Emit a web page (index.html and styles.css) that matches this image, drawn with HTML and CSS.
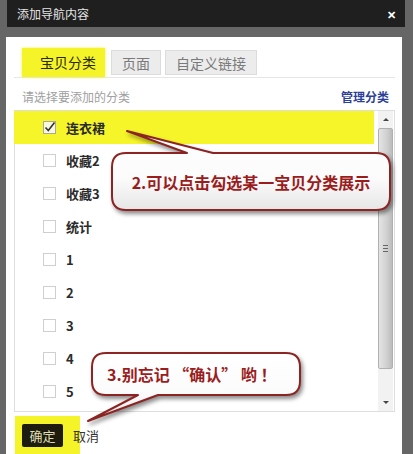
FILE: index.html
```html
<!DOCTYPE html>
<html>
<head>
    <meta charset="utf-8">
    <title>添加导航内容</title>
    <link rel="stylesheet" href="styles.css">
</head>
<body>

    <div class="titlebar">
        <span class="title">添加导航内容</span>
        <span class="close">&#x2715;</span>
    </div>

    <div class="panel">
        <div class="tabs">
            <div class="tab tab-active">宝贝分类</div>
            <div class="tab">页面</div>
            <div class="tab">自定义链接</div>
        </div>

        <div class="hint-row">
            <span class="hint">请选择要添加的分类</span>
            <a class="manage">管理分类</a>
        </div>

        <div class="listbox">
            <div class="rows">
                <div class="row row-checked">
                    <span class="check"><svg width="13" height="13" viewBox="0 0 13 13"><path d="M2.5 6.5 L5.3 9.5 L11.5 1.5" fill="none" stroke="#333" stroke-width="1.6"/></svg></span>
                    <span class="label">连衣裙</span>
                </div>
                <div class="row"><span class="check"></span><span class="label">收藏2</span></div>
                <div class="row"><span class="check"></span><span class="label">收藏3</span></div>
                <div class="row"><span class="check"></span><span class="label">统计</span></div>
                <div class="row"><span class="check"></span><span class="label">1</span></div>
                <div class="row"><span class="check"></span><span class="label">2</span></div>
                <div class="row"><span class="check"></span><span class="label">3</span></div>
                <div class="row"><span class="check"></span><span class="label">4</span></div>
                <div class="row"><span class="check"></span><span class="label">5</span></div>
            </div>
            <div class="scrollbar">
                <div class="sb-btn"><span class="arrow-up"></span></div>
                <div class="sb-thumb"><span class="grip"></span></div>
                <div class="sb-track"></div>
                <div class="sb-btn"><span class="arrow-down"></span></div>
            </div>
        </div>

        <div class="actions">
            <span class="btn-hl"><button class="btn-ok">确定</button></span>
            <span class="cancel">取消</span>
        </div>
    </div>

    <!-- annotation bubbles drawn over the dialog -->
    <div class="callout callout-a">
        <svg class="bubble" width="288" height="92" viewBox="0 0 288 92">
            <defs>
                <linearGradient id="fillA" x1="0" y1="0" x2="0" y2="1">
                    <stop offset="0" stop-color="#ffffff"/>
                    <stop offset="0.6" stop-color="#fbfbfb"/>
                    <stop offset="1" stop-color="#e6e6e6"/>
                </linearGradient>
            </defs>
            <path d="M18 27 L79 27 L19 5 L105 27 L268 27 Q282 27 282 41 L282 70 Q282 84 268 84 L18 84 Q4 84 4 70 L4 41 Q4 27 18 27 Z"
                  fill="url(#fillA)" stroke="#8c2424" stroke-width="2" stroke-linejoin="round"/>
        </svg>
        <div class="callout-text">2.可以点击勾选某一宝贝分类展示</div>
    </div>

    <div class="callout callout-b">
        <svg class="bubble" width="220" height="76" viewBox="0 0 220 76">
            <defs>
                <linearGradient id="fillB" x1="0" y1="0" x2="0" y2="1">
                    <stop offset="0" stop-color="#ffffff"/>
                    <stop offset="0.6" stop-color="#fbfbfb"/>
                    <stop offset="1" stop-color="#e6e6e6"/>
                </linearGradient>
            </defs>
            <path d="M20 5 L200 5 Q214 5 214 19 L214 33 Q214 47 200 47 L72 47 L2 73 L52 47 L20 47 Q6 47 6 33 L6 19 Q6 5 20 5 Z"
                  fill="url(#fillB)" stroke="#8c2424" stroke-width="2" stroke-linejoin="round"/>
        </svg>
        <div class="callout-text">3.别忘记 “确认” 哟 ！</div>
    </div>

</body>
</html>
```

FILE: styles.css
```css
html, body {
    margin: 0;
    height: 454px;
    overflow: hidden;
}
body {
    background-color: #666666;
    font-family: "Noto Sans CJK SC", "Microsoft YaHei", sans-serif;
    color: #333;
}

.titlebar {
    margin: 0 8px 0 7px;
    height: 27px;
    background-color: #1f1f1f;
    display: flex;
    align-items: center;
    justify-content: space-between;
    padding: 0 9px 0 10px;
}
.title {
    color: #e4e4e4;
    font-size: 12px;
}
.close {
    color: #fff;
    font-size: 11px;
    font-weight: bold;
}

.panel {
    margin: 10px 11px 0 6px;
    height: 417px;
    background-color: #fff;
    padding: 11px 7px 0 8px;
    box-sizing: border-box;
}

/* tabs */
.tabs {
    display: flex;
    align-items: center;
    height: 29px;
    padding-left: 8px;
    border-bottom: 1px solid #e6e6e6;
}
.tab {
    height: 25px;
    line-height: 25px;
    padding: 0 10px;
    margin-left: 4px;
    font-size: 14px;
    color: #7a7a7a;
    background-color: #ececec;
    border: 1px solid #dcdcdc;
    box-sizing: border-box;
}
.tab-active {
    height: 29px;
    line-height: 29px;
    margin-left: 0;
    margin-right: 2px;
    padding: 0 9px 0 18px;
    color: #2a2a10;
    background-color: #f5f428;
    border: none;
    box-shadow: 0 0 3px #f0ef60;
}

.hint-row {
    display: flex;
    justify-content: space-between;
    align-items: center;
    height: 16px;
    margin-top: 10px;
    padding: 0 6px 0 8px;
    font-size: 12px;
}
.hint {
    color: #a0a0a0;
}
.manage {
    color: #2d3f98;
    font-weight: bold;
}

/* category list */
.listbox {
    margin-top: 6px;
    height: 302px;
    border: 1px solid #dedede;
    box-sizing: border-box;
    display: flex;
}
.rows {
    flex: 1;
    margin-right: 4px;
}
.row {
    height: 33px;
    display: flex;
    align-items: center;
    padding-left: 28px;
}
.row-checked {
    background-color: #f6f52a;
    margin-left: -1px;
    padding-left: 29px;
}
.check {
    width: 13px;
    height: 13px;
    border: 1px solid #cfcfcf;
    background-color: #fff;
    box-sizing: border-box;
    margin-right: 10px;
    display: flex;
}
.row-checked .check {
    border-color: #a8a8a0;
    background-color: #f8f8e0;
}
.check svg {
    margin: -1px;
}
.label {
    font-size: 13px;
    font-weight: bold;
    color: #2b2b2b;
}

.scrollbar {
    width: 15px;
    margin-right: 1px;
    display: flex;
    flex-direction: column;
    background-color: #f2f2f2;
}
.sb-btn {
    height: 17px;
    display: flex;
    align-items: center;
    justify-content: center;
}
.arrow-up {
    border-left: 3px solid transparent;
    border-right: 3px solid transparent;
    border-bottom: 3px solid #444;
}
.arrow-down {
    border-left: 3px solid transparent;
    border-right: 3px solid transparent;
    border-top: 3px solid #444;
}
.sb-thumb {
    height: 241px;
    border: 1px solid #b0b0b0;
    border-radius: 2px;
    box-sizing: border-box;
    background: linear-gradient(to right, #e4e4e4, #d0d0d0 60%, #bcbcbc);
    display: flex;
    align-items: center;
    justify-content: center;
}
.grip {
    width: 5px;
    height: 7px;
    background: repeating-linear-gradient(to bottom, #666 0 1px, transparent 1px 3px);
}
.sb-track {
    flex: 1;
}

/* bottom buttons */
.actions {
    margin-top: 4px;
    display: flex;
    align-items: center;
}
.btn-hl {
    margin-left: 1px;
    padding: 8px 17px 8px 7px;
    background-color: #f5f428;
    display: flex;
}
.btn-ok {
    width: 41px;
    height: 23px;
    padding: 0;
    border: none;
    border-radius: 2px;
    background-color: #1d1c0e;
    color: #deddb4;
    font-family: "Noto Sans CJK SC", sans-serif;
    font-size: 13px;
}
.cancel {
    margin-left: -7px;
    font-size: 13px;
    color: #333;
}

/* annotation bubbles */
.callout {
    position: absolute;
}
.bubble {
    position: absolute;
    left: 0;
    top: 0;
    filter: drop-shadow(2px 3px 2px rgba(0, 0, 0, 0.45));
}
.callout-text {
    position: relative;
    display: flex;
    align-items: center;
    justify-content: center;
    color: #9b1c1c;
    font-size: 16px;
    font-weight: bold;
}
.callout-a {
    left: 108px;
    top: 126px;
    width: 288px;
    height: 92px;
}
.callout-a .callout-text {
    margin: 27px 6px 0 4px;
    height: 57px;
}
.callout-b {
    left: 86px;
    top: 348px;
    width: 220px;
    height: 76px;
}
.callout-b .callout-text {
    margin: 5px 6px 0 6px;
    height: 42px;
    justify-content: flex-start;
    padding-left: 15px;
    white-space: pre;
}
```
